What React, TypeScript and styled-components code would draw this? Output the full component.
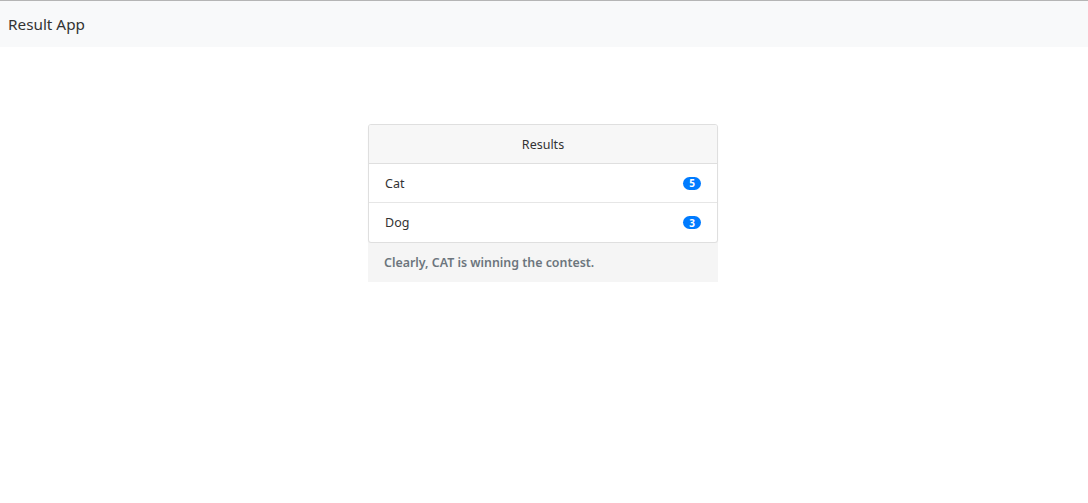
import React from "react";
import styled, { createGlobalStyle } from "styled-components";

const GlobalStyle = createGlobalStyle`
  body {
    margin: 0;
    background: #fff;
    font-family: "Segoe UI", "Noto Sans", "Liberation Sans", sans-serif;
    color: #212529;
  }
`;

const NavBar = styled.nav`
  height: 47px;
  display: flex;
  align-items: center;
  padding: 0 8px;
  background: #f8f9fa;
  border-top: 1px solid #b5b5b5;
  box-sizing: border-box;
`;
const Brand = styled.span`
  font-size: 15.3px;
  color: #333;
`;

const Main = styled.main`
  display: flex;
  justify-content: center;
  padding: 77px 2px 0 0;
`;
const Panel = styled.div`
  width: 350px;
  display: flex;
  flex-direction: column;
`;
const Card = styled.div`
  border: 1px solid #dfdfdf;
  border-radius: 3px;
  box-shadow: 0 1px 1px rgba(0, 0, 0, 0.08);
  background: #fff;
  overflow: hidden;
`;
const CardHeader = styled.div`
  height: 38px;
  display: flex;
  align-items: center;
  justify-content: center;
  background: #f7f7f7;
  border-bottom: 1px solid #dfdfdf;
  font-size: 12.5px;
  color: #333;
`;
const Item = styled.div<{ $last?: boolean }>`
  height: ${(p) => (p.$last ? "39px" : "38px")};
  display: flex;
  align-items: center;
  justify-content: space-between;
  padding: 0 16px;
  border-bottom: ${(p) => (p.$last ? "none" : "1px solid #e6e6e6")};
  font-size: 12.5px;
  color: #333;
`;
const Badge = styled.span`
  min-width: 18px;
  height: 13px;
  padding: 0 4px;
  box-sizing: border-box;
  border-radius: 7px;
  background: #007bff;
  color: #fff;
  font-size: 10px;
  font-weight: 700;
  display: flex;
  align-items: center;
  justify-content: center;
`;
const Footer = styled.div`
  height: 39px;
  display: flex;
  align-items: center;
  padding: 0 16px;
  background: #f5f5f5;
  font-size: 12.4px;
  font-weight: 600;
  color: #6c757d;
`;

const results = [
  { name: "Cat", votes: 5 },
  { name: "Dog", votes: 3 },
];

const App = () => {
  const winner = [...results].sort((a, b) => b.votes - a.votes)[0];
  return (
    <>
      <GlobalStyle />
      <NavBar>
        <Brand>Result App</Brand>
      </NavBar>
      <Main>
        <Panel>
          <Card>
            <CardHeader>Results</CardHeader>
            {results.map((r, i) => (
              <Item key={r.name} $last={i === results.length - 1}>
                {r.name}
                <Badge>{r.votes}</Badge>
              </Item>
            ))}
          </Card>
          <Footer>Clearly, {winner.name.toUpperCase()} is winning the contest.</Footer>
        </Panel>
      </Main>
    </>
  );
};

export default App;
